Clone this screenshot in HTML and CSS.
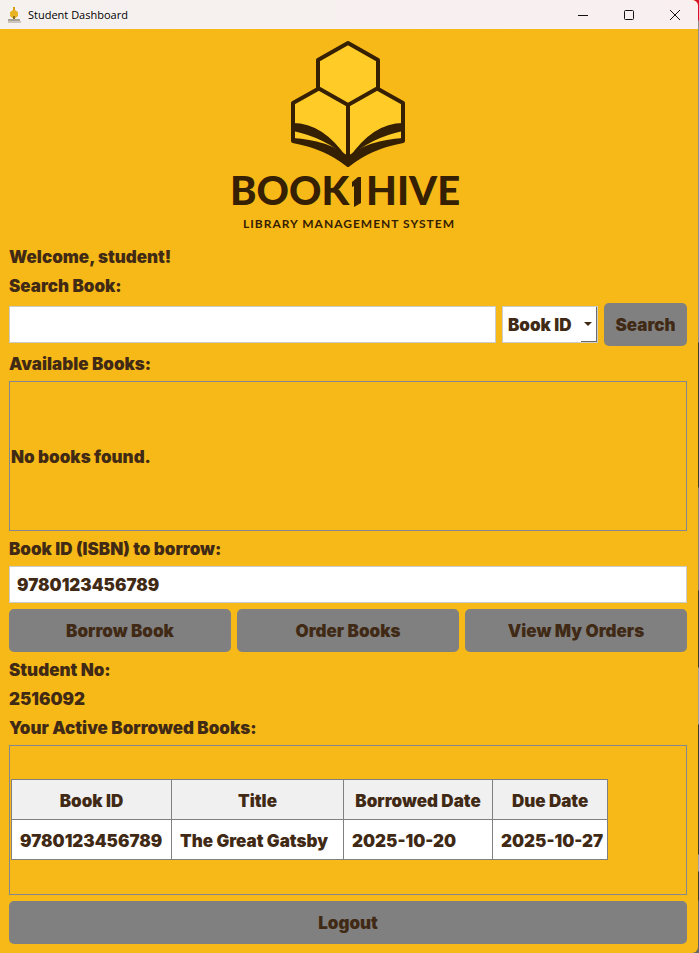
FILE: index.html
```html
<!DOCTYPE html>
<html lang="en">
<head>
<meta charset="utf-8">
<title>Student Dashboard</title>
<link rel="stylesheet" href="styles.css">
</head>
<body>
<div class="window">
  <header class="titlebar">
    <svg class="app-icon" viewBox="0 0 16 18" aria-hidden="true">
      <path d="M7 1h2v3l2 2v4L9 12H7L5 10V6l2-2z" fill="#d9a017"/>
      <path d="M4 6l4-2 4 2v4l-4 3-4-3z" fill="#e9b423"/>
      <path d="M7 10h2v3H7z" fill="#8b6f24"/>
      <path d="M2 13h12v2H2z" fill="#a8a196"/>
      <path d="M2 15h13v2H2z" fill="#cbc5bc"/>
    </svg>
    <h1 class="title">Student Dashboard</h1>
    <div class="controls">
      <button class="control" aria-label="Minimize"><svg viewBox="0 0 12 12"><path d="M1 6.500h10"/></svg></button>
      <button class="control" aria-label="Maximize"><svg viewBox="0 0 12 12"><rect x="1.500" y="1.500" width="9" height="9" rx="1"/></svg></button>
      <button class="control" aria-label="Close"><svg viewBox="0 0 12 12"><path d="M1 1l10 10M11 1L1 11"/></svg></button>
    </div>
  </header>

  <main class="content">
    <svg class="logo" viewBox="0 0 250 201" role="img" aria-label="Book1Hive Library Management System">
      <g class="hive">
        <path class="cell" d="M125 5l30 17v29l25 14v38q-33 6-55 24q-22-18-55-24V65l25-14V22z"/>
        <path class="line" d="M95 50l30 17 30-17M125 67v56"/>
        <path class="page" d="M70 85q30 0 54 35q-21-20-54-27z"/>
        <path class="page" d="M180 85q-30 0-54 35q21-20 54-27z"/>
        <path class="page" d="M70 100q34 2 55 18q21-16 55-18v4q-33 6-55 24q-22-18-55-24z"/>
      </g>
      <text class="brand" x="7" y="167">BOOK</text>
      <path class="digit" d="M129 144l6-5h3v26l-7 4v-21l-2 1z"/>
      <text class="brand" x="143" y="167">HIVE</text>
      <text class="tagline" x="20" y="190">LIBRARY MANAGEMENT SYSTEM</text>
    </svg>

    <p class="label">Welcome, student!</p>
    <label class="label" for="search">Search Book:</label>
    <div class="search-row">
      <input class="field" id="search" type="text">
      <div class="picker">
        <select class="select" aria-label="Search by">
          <option>Book ID</option>
          <option>Title</option>
        </select>
        <svg class="arrow" viewBox="0 0 8 4" aria-hidden="true"><path d="M0 0h8L4 4z"/></svg>
      </div>
      <button class="button search-button">Search</button>
    </div>

    <h2 class="label">Available Books:</h2>
    <section class="panel"><p class="empty">No books found.</p></section>

    <label class="label" for="isbn">Book ID (ISBN) to borrow:</label>
    <input class="field" id="isbn" type="text" value="9780123456789">
    <div class="actions">
      <button class="button">Borrow Book</button>
      <button class="button">Order Books</button>
      <button class="button">View My Orders</button>
    </div>

    <p class="label">Student No:</p>
    <p class="label">2516092</p>
    <h2 class="label">Your Active Borrowed Books:</h2>
    <section class="panel">
      <table class="loans">
        <colgroup><col class="col-id"><col class="col-title"><col class="col-borrowed"><col class="col-due"></colgroup>
        <thead><tr><th>Book ID</th><th>Title</th><th>Borrowed Date</th><th>Due Date</th></tr></thead>
        <tbody><tr><td>9780123456789</td><td>The Great Gatsby</td><td>2025-10-20</td><td>2025-10-27</td></tr></tbody>
      </table>
    </section>
    <button class="button">Logout</button>
  </main>
</div>
</body>
</html>
```
FILE: styles.css
```css
* { box-sizing: border-box; }
body {
  margin: 0;
  background: linear-gradient(#d8102f 20px, #8f8f8f 21px 342px, #3a3a30 343px 487px, #86807a 488px 590px, #3a3a30 591px 667px, #a0a0a0 668px 724px, #3a3a30 725px 854px, #a0a0a0 855px 871px, #3a3a30 872px 900px, #666 901px);
  color: #412a15;
  font: 900 17px/23px Inter, "Liberation Sans", sans-serif;
}
button, input, select { font: inherit; color: inherit; }
h1, h2, p { margin: 0; font: inherit; }
.window {
  margin-right: 1px;
  background: #f7b917;
  border-radius: 0 6px 6px 0;
}
.titlebar {
  display: flex;
  align-items: center;
  height: 29px;
  padding-left: 6px;
  background: linear-gradient(90deg, #f5f1ef, #f9eff0);
  border-radius: 0 6px 0 0;
}
.app-icon { width: 16px; height: 18px; margin-right: 6px; }
.title { font: 400 11px/16px "Open Sans", "Noto Sans", sans-serif; color: #000; }
.controls { display: flex; margin-left: auto; }
.control {
  display: grid;
  place-items: center;
  width: 46px;
  height: 27px;
  padding: 0;
  border: 0;
  background: none;
}
.control svg { width: 12px; height: 12px; fill: none; stroke: #111; }
.content {
  display: flex;
  flex-direction: column;
  gap: 6px;
  padding: 9px 11px 9px 9px;
}
.logo { align-self: center; width: 250px; height: 201px; }
.cell { fill: #ffcb27; stroke: #352003; stroke-width: 4; stroke-linejoin: round; }
.line { fill: none; stroke: #352003; stroke-width: 4; }
.page, .digit { fill: #352003; }
.brand { font: 900 40px Lato, sans-serif; fill: #352003; }
.tagline { font: 700 12px Lato, sans-serif; letter-spacing: 1px; fill: #352003; }
.label { display: block; height: 23px; line-height: 25px; }
.field {
  width: 100%;
  min-width: 0;
  height: 37px;
  padding: 0 7px;
  border: 1px solid #ccc;
  background: #fff;
}
.search-row { display: flex; align-items: center; gap: 6px; }
.search-row .field { flex: 1; }
.picker { position: relative; width: 96px; }
.select {
  display: block;
  width: 100%;
  height: 37px;
  padding: 2px 5px 0;
  border: 1px solid #ccc;
  border-radius: 0;
  background: #fff;
  appearance: none;
}
.arrow {
  position: absolute;
  top: 1px;
  right: 1px;
  width: 16px;
  height: 35px;
  padding: 0 4px 0 3px;
  border-right: 1px solid #696969;
  border-bottom: 1px solid #696969;
  fill: #412a15;
  pointer-events: none;
}
.button {
  height: 43px;
  padding: 2px 10px 0;
  border: 0;
  border-radius: 5px;
  background: #808080;
}
.search-button { width: 83px; }
.panel {
  display: flex;
  align-items: center;
  min-height: 150px;
  padding: 0 1px 1px;
  border: 1px solid #828790;
}
.empty { padding-top: 4px; }
.actions { display: grid; grid-template-columns: repeat(3, 1fr); gap: 6px; }
.loans { border-collapse: collapse; background: #fff; }
.loans th, .loans td {
  height: 40px;
  padding: 4px 4px 0 8px;
  border: 1px solid #808080;
  font-weight: inherit;
  text-align: left;
  white-space: nowrap;
}
.loans th { padding: 4px 4px 0; background: #f0f0f0; text-align: center; }
.col-id { width: 160px; }
.col-title { width: 172px; }
.col-borrowed { width: 149px; }
.col-due { width: 115px; }
```
